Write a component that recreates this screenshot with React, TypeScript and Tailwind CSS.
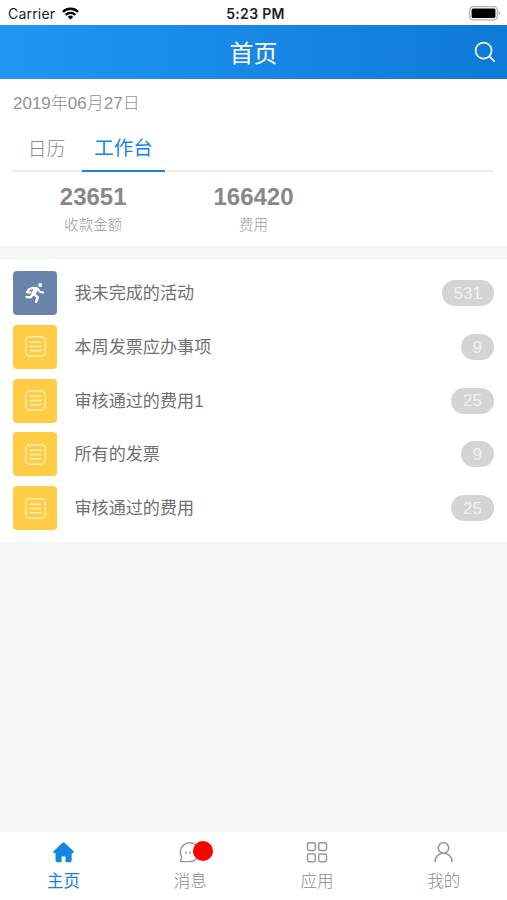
import React, { useState } from 'react'

interface WorkItem {
  title: string
  count: number
  kind: 'activity' | 'list'
}

const workItems: WorkItem[] = [
  { title: '我未完成的活动', count: 531, kind: 'activity' },
  { title: '本周发票应办事项', count: 9, kind: 'list' },
  { title: '审核通过的费用1', count: 25, kind: 'list' },
  { title: '所有的发票', count: 9, kind: 'list' },
  { title: '审核通过的费用', count: 25, kind: 'list' }
]

const stats = [
  { label: '收款金额', value: '23651' },
  { label: '费用', value: '166420' }
]

function WifiIcon() {
  return (
    <svg className="w-[17px] h-[13px]" viewBox="0 0 17 13" fill="none" stroke="#000" strokeWidth="2.3">
      <path d="M0.9 4.9a10.8 10.8 0 0 1 15.2 0" />
      <path d="M3.7 7.9a6.8 6.8 0 0 1 9.6 0" />
      <path d="M8.5 12.6L5.8 9.9a3.8 3.8 0 0 1 5.4 0z" fill="#000" stroke="none" />
    </svg>
  )
}

function BatteryIcon() {
  return (
    <svg className="w-8 h-[15px]" viewBox="0 0 32 15" fill="none">
      <rect x="0.7" y="0.7" width="27.6" height="13.2" rx="3.6" stroke="#b0b0b0" strokeWidth="1.3" />
      <rect x="2.6" y="2.6" width="23.8" height="9.4" rx="1.6" fill="#000" />
      <path d="M29.8 5.2c1.8 0.6 1.8 3.6 0 4.2z" fill="#a6a6a6" />
    </svg>
  )
}

function SearchIcon() {
  return (
    <svg className="w-[22px] h-[22px]" viewBox="0 0 22 22" fill="none" stroke="#fff" strokeWidth="1.7" strokeLinecap="round">
      <circle cx="9.6" cy="9.6" r="8" />
      <path d="M15.4 15.4l4.8 4.8" />
    </svg>
  )
}

function RunnerIcon() {
  return (
    <svg className="w-5 h-5" viewBox="0 0 20 20" fill="none" stroke="#fff" strokeLinecap="round" strokeLinejoin="round">
      <circle cx="15.2" cy="2.1" r="2" fill="#fff" stroke="none" />
      <path d="M10.8 6L8.6 10.6" strokeWidth="4.4" />
      <path d="M8.4 4.8L4.2 6L2 9.4h3.4" strokeWidth="2.2" />
      <path d="M12.6 5.6l2.4 3.4l3.2 0.4" strokeWidth="2" />
      <path d="M9.4 11.4l3.4 3L11.2 18.6" strokeWidth="2.6" />
      <path d="M7.6 11.6L5.4 14.4L1.6 14" strokeWidth="2.4" />
    </svg>
  )
}

function ListIcon() {
  return (
    <svg className="w-[21px] h-[21px]" viewBox="0 0 21 21" fill="none" stroke="#fff0bd" strokeWidth="1.4" strokeLinecap="round">
      <rect x="0.8" y="0.8" width="19.4" height="19.4" rx="4" />
      <path d="M5.4 6.2h10.2M5.4 10.5h10.2M5.4 14.8h10.2" />
    </svg>
  )
}

function HomeIcon() {
  return (
    <svg className="w-[22px] h-[22px]" viewBox="0 0 22 22" fill="#1485e0">
      <path d="M10.2 2a1.9 1.9 0 0 1 2.6 0l8.5 8c0.8 0.8 0.4 1.9-0.7 1.9h-0.9v7.4a1.9 1.9 0 0 1-1.9 1.9h-4.2v-5.6h-4v5.6H5.4a1.9 1.9 0 0 1-1.9-1.900v-7.400h-1.100c-1.100 0-1.500-1.100-0.700-1.900z" />
    </svg>
  )
}

function MessageIcon() {
  return (
    <svg className="w-[22px] h-[22px]" viewBox="0 0 22 22" fill="none" stroke="#999" strokeWidth="1.4" strokeLinejoin="round">
      <path d="M1.6 20.6L2.6 16A9.4 9.4 0 1 1 11 20.600z" />
      <path d="M6 11.6h1.8M10.1 11.6h1.8M14.2 11.6h1.8" strokeWidth="1.7" />
    </svg>
  )
}

function AppsIcon() {
  return (
    <svg className="w-[22px] h-[22px]" viewBox="0 0 22 22" fill="none" stroke="#999" strokeWidth="1.5">
      <rect x="1.5" y="1.7" width="7.8" height="7.8" rx="1.4" />
      <rect x="12.7" y="1.7" width="7.8" height="7.8" rx="1.4" />
      <rect x="1.5" y="12.9" width="7.8" height="7.8" rx="1.4" />
      <rect x="12.7" y="12.9" width="7.8" height="7.8" rx="1.4" />
    </svg>
  )
}

function UserIcon() {
  return (
    <svg className="w-[22px] h-[22px]" viewBox="0 0 22 22" fill="none" stroke="#999" strokeWidth="1.6" strokeLinecap="round">
      <circle cx="10.5" cy="7" r="5.2" />
      <path d="M2 20.6c0-4.800 3.700-8.400 8.500-8.400s8.500 3.600 8.500 8.400" />
    </svg>
  )
}

const navItems = [
  { label: '主页', icon: <HomeIcon />, unread: false },
  { label: '消息', icon: <MessageIcon />, unread: true },
  { label: '应用', icon: <AppsIcon />, unread: false },
  { label: '我的', icon: <UserIcon />, unread: false }
]

export default function App() {
  const [tab, setTab] = useState('工作台')
  const [page, setPage] = useState('主页')

  return (
    <div className="flex h-screen flex-col bg-[#f5f5f5] font-['Liberation_Sans','Noto_Sans_CJK_SC',sans-serif] font-light">
      {/* Status bar */}
      <div className="grid h-[25px] shrink-0 grid-cols-[1fr_auto_1fr] items-center bg-white pl-2 pr-1.5 pt-0.5 font-['Inter',sans-serif] text-[14px] font-normal text-[#222]">
        <div className="flex items-center gap-[7px]">
          <span className="tracking-[0.2px]">Carrier</span>
          <WifiIcon />
        </div>
        <span className="pl-0.5 font-semibold tracking-[0.3px]">5:23 PM</span>
        <div className="flex justify-end">
          <BatteryIcon />
        </div>
      </div>

      {/* Title bar */}
      <header className="grid h-[54px] shrink-0 grid-cols-[1fr_auto_1fr] items-center bg-linear-to-r from-[#2196f3] to-[#0d7ad6] px-[11px] text-white">
        <h1 className="col-start-2 pt-[3px] text-[24px] font-normal leading-none">首页</h1>
        <button className="justify-self-end">
          <SearchIcon />
        </button>
      </header>

      {/* Summary */}
      <section className="h-[167px] shrink-0 bg-white px-[13px] pt-3">
        <p className="h-[26px] text-[17px] leading-[26px] text-[#939393]">2019年06月27日</p>
        <div className="flex h-[55px] border-b-2 border-[#eee] pt-2.5">
          {['日历', '工作台'].map((name) => (
            <button
              key={name}
              onClick={() => setTab(name)}
              className={`-mb-0.5 border-b-2 ${
                tab === name
                  ? 'w-[83px] border-[#1485e0] text-[19.5px] font-normal text-[#1485e0]'
                  : 'w-[69px] border-transparent pt-1 pr-0.5 text-[18.8px] text-[#888]'
              }`}
            >
              {name}
            </button>
          ))}
        </div>
        <div className="grid grid-cols-3 pt-2.5 text-center">
          {stats.map((stat) => (
            <div key={stat.label}>
              <p className="text-[24px] font-bold leading-[30px] text-[#888]">{stat.value}</p>
              <p className="pt-px text-[14.5px] leading-6 text-[#999]">{stat.label}</p>
            </div>
          ))}
        </div>
      </section>

      {/* Work list */}
      <ul className="mt-[13px] flex h-[283px] shrink-0 flex-col justify-between bg-white px-[13px] py-3">
        {workItems.map((item) => (
          <li key={item.title} className="flex items-center">
            <div
              className={`flex h-11 w-11 items-center justify-center rounded-[4px] ${
                item.kind === 'activity' ? 'bg-[#6a83ab]' : 'bg-[#ffcc44]'
              }`}
            >
              {item.kind === 'activity' ? <RunnerIcon /> : <ListIcon />}
            </div>
            <span className="ml-[17.5px] flex-1 pt-0.5 text-[17.1px] font-normal text-[#707070]">{item.title}</span>
            <span className="flex h-[26px] items-center rounded-full bg-[#d4d4d4] px-3 pt-px text-[17px] text-[#f0f0f0]">
              {item.count}
            </span>
          </li>
        ))}
      </ul>

      {/* Bottom navigation */}
      <nav className="mt-auto grid h-[68px] grid-cols-4 bg-white">
        {navItems.map((item) => (
          <button
            key={item.label}
            onClick={() => setPage(item.label)}
            className={`flex flex-col items-center pt-[9px] text-[16.5px] ${
              page === item.label ? 'font-normal text-[#1485e0]' : 'text-[#888]'
            }`}
          >
            <span className="relative">
              {item.icon}
              {item.unread && <span className="absolute -right-3 top-0 h-5 w-5 rounded-full bg-[#ff0000]" />}
            </span>
            <span className="mt-1 leading-7">{item.label}</span>
          </button>
        ))}
      </nav>
    </div>
  )
}
